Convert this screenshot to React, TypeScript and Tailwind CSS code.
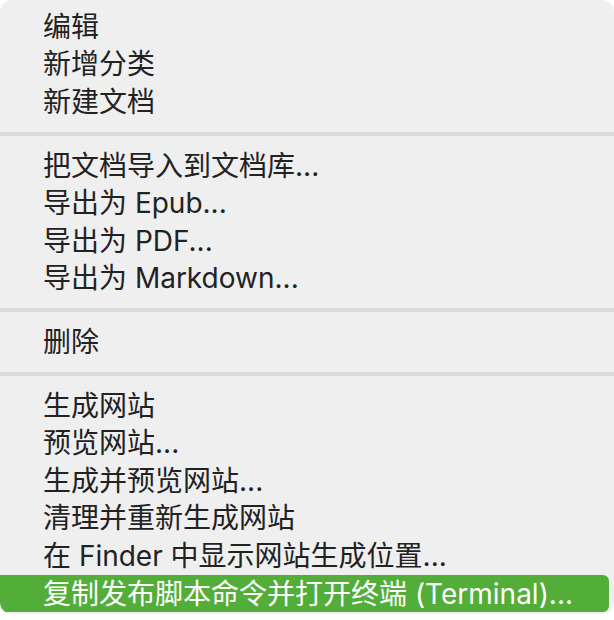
import React from 'react';

const groups: string[][] = [
  ['编辑', '新增分类', '新建文档'],
  ['把文档导入到文档库...', '导出为 Epub...', '导出为 PDF...', '导出为 Markdown...'],
  ['删除'],
  [
    '生成网站',
    '预览网站...',
    '生成并预览网站...',
    '清理并重新生成网站',
    '在 Finder 中显示网站生成位置...',
    '复制发布脚本命令并打开终端 (Terminal)...',
  ],
];

const MenuItem = ({ label, active }: { label: string; active?: boolean }) => (
  <div
    className={
      active
        ? 'flex h-[37.6px] items-center rounded-r-[6px] mr-[5px] bg-[#53ad39] pl-[43px] text-white'
        : 'flex h-[37.6px] items-center pl-[43px] text-[#222222]'
    }
  >
    <span className="leading-none whitespace-nowrap">{label}</span>
  </div>
);

const Separator = () => (
  <div className="flex h-[26px] items-center">
    <div className="h-[4px] w-full bg-[#dadada]" />
  </div>
);

const App = () => {
  const last = groups.length - 1;
  return (
    <div className="h-[620px] w-[614px] overflow-hidden bg-white">
      <div className="h-[614px] w-[614px] overflow-hidden rounded-[12px] bg-[#efefef] pt-[8px] font-['Inter','Noto_Sans_CJK_SC',sans-serif] text-[28px]">
        {groups.map((items, gi) => (
          <React.Fragment key={gi}>
            {gi > 0 && <Separator />}
            {items.map((label, i) => (
              <MenuItem key={label} label={label} active={gi === last && i === items.length - 1} />
            ))}
          </React.Fragment>
        ))}
      </div>
    </div>
  );
};

export default App;
